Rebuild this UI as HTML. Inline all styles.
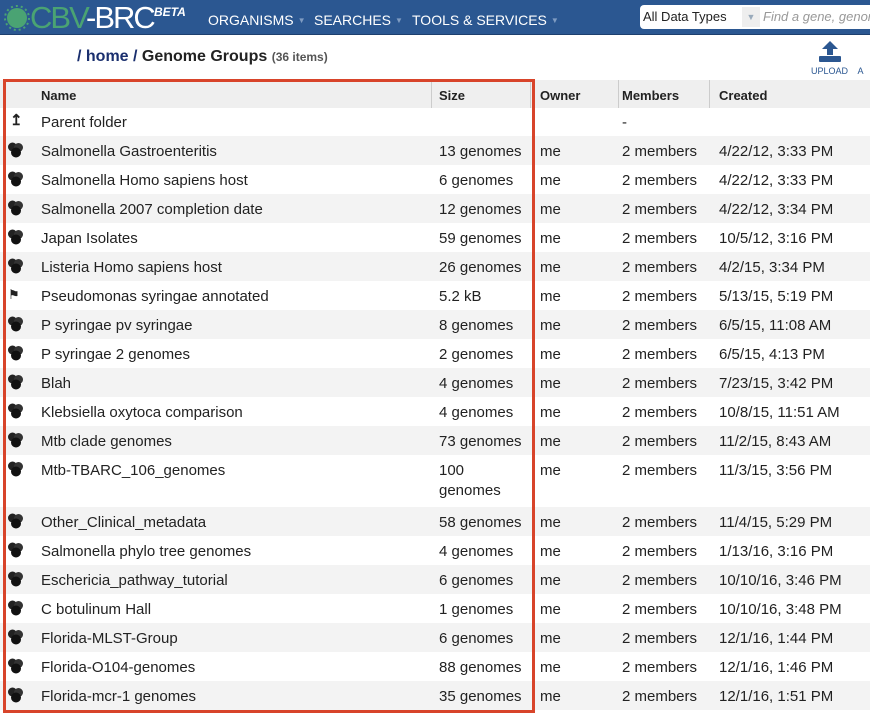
<!DOCTYPE html>
<html><head><meta charset="utf-8"><style>
*{margin:0;padding:0;box-sizing:border-box}
body{width:870px;height:715px;overflow:hidden;background:#fff;font-family:"Liberation Sans",Arial,sans-serif;position:relative;color:#222}
.top{position:absolute;left:0;top:0;width:870px;height:35px;background:#2b5791;border-bottom:1px solid #1d3f6e}
.logo{position:absolute;left:30px;top:0px;font-size:31px;color:#4aa373;letter-spacing:-2px;white-space:nowrap}
.logo b{font-weight:normal;color:#fff}
.beta{position:absolute;left:154px;top:5px;color:#fff;font-style:italic;font-weight:bold;font-size:12px}
.nav{position:absolute;top:12px;color:#fff;font-size:14px;white-space:nowrap}
.nav i{font-style:normal;color:#7f9cc2;font-size:8px;margin-left:4px;vertical-align:2px}
.sel{position:absolute;left:640px;top:5px;width:240px;height:24px;background:#fff;border-radius:4px;font-size:13px;white-space:nowrap;overflow:hidden}
.sel span{position:absolute;left:3px;top:4px}
.sel .dd{position:absolute;left:102px;top:2px;width:18px;height:20px;background:#eee;color:#9ab;font-size:9px;text-align:center;line-height:20px}
.sel em{position:absolute;left:123px;top:4px;color:#999}
.crumb{position:absolute;left:77px;top:48px;font-size:16px;font-weight:bold;color:#222}
.crumb a{color:#1a2f6e}
.crumb small{font-size:12px;color:#555}
.up{position:absolute;left:811px;top:66px;font-size:9px;color:#2b5791;white-space:nowrap}
.row{position:absolute;left:0;width:870px;height:29px;font-size:15px}
.row div{position:absolute;top:7px;white-space:nowrap}
.g{background:#f3f3f3}
.hdr{position:absolute;left:0;top:80px;width:870px;height:28px;background:#efefef;font-size:13px;font-weight:bold}
.hdr div{position:absolute;top:8px}
.sep{position:absolute;top:80px;width:1px;height:28px;background:#ccc}
.ic{position:absolute;left:7px;top:6px;width:17px;height:16px}
.box{position:absolute;left:3px;top:79px;width:532px;height:634px;border:3px solid #d8442a}
</style></head><body>
<div class="top">
<svg style="position:absolute;left:4px;top:5px" width="30" height="26"><circle cx="13" cy="13" r="10" fill="#4aa373"/><circle cx="13" cy="13" r="12" fill="none" stroke="#4aa373" stroke-width="2" stroke-dasharray="2 3"/></svg>
<div class="logo">C<span style="color:#4aa373">BV</span><b>-BRC</b></div>
<div class="beta">BETA</div>
<div class="nav" style="left:208px">ORGANISMS<i>▼</i></div>
<div class="nav" style="left:314px">SEARCHES<i>▼</i></div>
<div class="nav" style="left:412px">TOOLS &amp; SERVICES<i>▼</i></div>
<div class="sel"><span>All Data Types</span><div class="dd">▼</div><em>Find a gene, genome</em></div>
</div>
<div class="crumb"><a>/ home /</a> Genome Groups <small>(36 items)</small></div>
<svg style="position:absolute;left:818px;top:40px" width="24" height="22"><path d="M12 1 L4 9 H9 V15 H15 V9 H20 Z" fill="#2b5791"/><rect x="1" y="16" width="22" height="6" rx="1" fill="#2b5791"/></svg>
<div class="up">UPLOAD &nbsp;&nbsp; A</div>
<div class="hdr"><div style="left:41px">Name</div><div style="left:439px">Size</div><div style="left:540px">Owner</div><div style="left:622px">Members</div><div style="left:719px">Created</div></div>
<div class="sep" style="left:431px"></div><div class="sep" style="left:530px"></div><div class="sep" style="left:618px"></div><div class="sep" style="left:709px"></div>
<div id="rows"></div>
<div class="box"></div>
<script>
var d=[["Parent folder","","","-",""],
["Salmonella Gastroenteritis","13 genomes","me","2 members","4/22/12, 3:33 PM"],
["Salmonella Homo sapiens host","6 genomes","me","2 members","4/22/12, 3:33 PM"],
["Salmonella 2007 completion date","12 genomes","me","2 members","4/22/12, 3:34 PM"],
["Japan Isolates","59 genomes","me","2 members","10/5/12, 3:16 PM"],
["Listeria Homo sapiens host","26 genomes","me","2 members","4/2/15, 3:34 PM"],
["Pseudomonas syringae annotated","5.2 kB","me","2 members","5/13/15, 5:19 PM"],
["P syringae pv syringae","8 genomes","me","2 members","6/5/15, 11:08 AM"],
["P syringae 2 genomes","2 genomes","me","2 members","6/5/15, 4:13 PM"],
["Blah","4 genomes","me","2 members","7/23/15, 3:42 PM"],
["Klebsiella oxytoca comparison","4 genomes","me","2 members","10/8/15, 11:51 AM"],
["Mtb clade genomes","73 genomes","me","2 members","11/2/15, 8:43 AM"],
["Mtb-TBARC_106_genomes","100<br><span style='line-height:23px'>genomes</span>","me","2 members","11/3/15, 3:56 PM"],
["Other_Clinical_metadata","58 genomes","me","2 members","11/4/15, 5:29 PM"],
["Salmonella phylo tree genomes","4 genomes","me","2 members","1/13/16, 3:16 PM"],
["Eschericia_pathway_tutorial","6 genomes","me","2 members","10/10/16, 3:46 PM"],
["C botulinum Hall","1 genomes","me","2 members","10/10/16, 3:48 PM"],
["Florida-MLST-Group","6 genomes","me","2 members","12/1/16, 1:44 PM"],
["Florida-O104-genomes","88 genomes","me","2 members","12/1/16, 1:46 PM"],
["Florida-mcr-1 genomes","35 genomes","me","2 members","12/1/16, 1:51 PM"]];
var h="",y=107;
var gi='<svg class="ic" viewBox="0 0 17 16"><circle cx="5.5" cy="5" r="4.5" fill="#222"/><circle cx="11.5" cy="5.5" r="4.5" fill="#333"/><circle cx="9" cy="10.5" r="5" fill="#111"/></svg>';
d.forEach(function(r,i){var ht=i==12?52:29;
var ic=i==0?'<div style="left:10px;top:4px;font-weight:bold">↥</div>':i==6?'<div style="left:8px;top:6px;font-size:13px">⚑</div>':gi;
h+='<div class="row'+(i%2?' g':'')+'" style="top:'+y+'px;height:'+ht+'px">'+ic+'<div style="left:41px">'+r[0]+'</div><div style="left:439px">'+r[1]+'</div><div style="left:540px">'+r[2]+'</div><div style="left:622px">'+r[3]+'</div><div style="left:719px">'+r[4]+'</div></div>';y+=ht;});
document.getElementById("rows").innerHTML=h;
</script>
</body></html>
